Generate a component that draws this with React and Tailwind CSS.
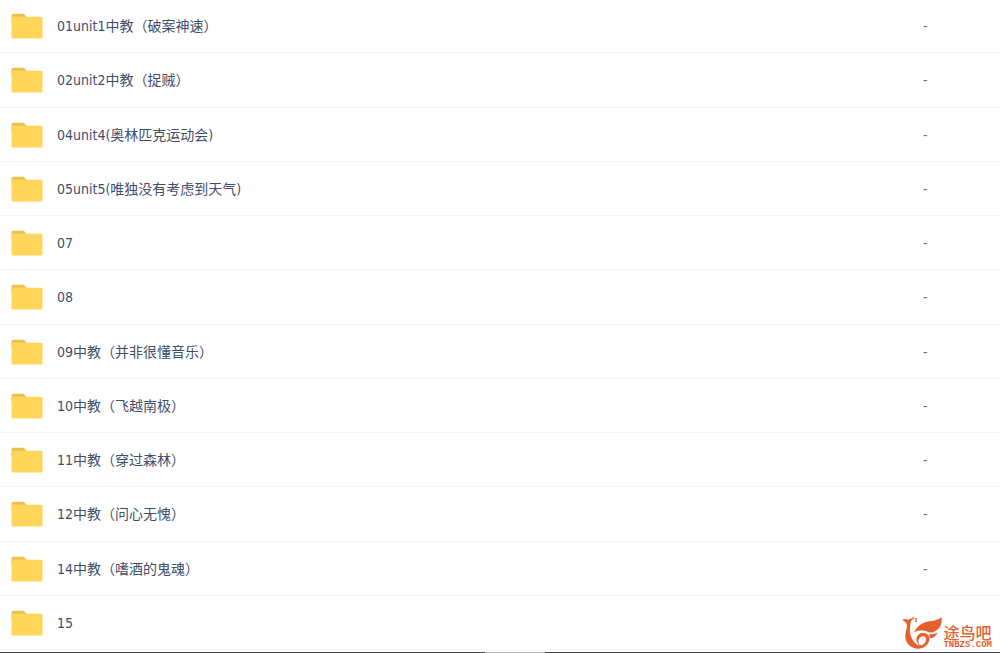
import React from "react";

const folders = [
  { id: 1, name: "01unit1中教（破案神速）", size: "-" },
  { id: 2, name: "02unit2中教（捉贼）", size: "-" },
  { id: 3, name: "04unit4(奥林匹克运动会)", size: "-" },
  { id: 4, name: "05unit5(唯独没有考虑到天气)", size: "-" },
  { id: 5, name: "07", size: "-" },
  { id: 6, name: "08", size: "-" },
  { id: 7, name: "09中教（并非很懂音乐）", size: "-" },
  { id: 8, name: "10中教（飞越南极）", size: "-" },
  { id: 9, name: "11中教（穿过森林）", size: "-" },
  { id: 10, name: "12中教（问心无愧）", size: "-" },
  { id: 11, name: "14中教（嗜酒的鬼魂）", size: "-" },
  { id: 12, name: "15", size: "" },
];

const FolderIcon = () => (
  <svg className="w-8 h-[26px] shrink-0" viewBox="0 0 32 26" aria-hidden="true">
    <path
      d="M0.5 2.5Q0.5 0.8 2.2 0.8H12Q13 0.8 13.6 1.6L15.5 4V9H0.5Z"
      fill="#ecc04f"
    />
    <path
      d="M0.5 5.2Q0.5 3.8 2 3.8H30Q31.5 3.8 31.5 5.3V24Q31.5 25.5 30 25.5H2Q0.5 25.5 0.5 24Z"
      fill="#ffd65a"
    />
  </svg>
);

const BirdLogo = () => (
  <svg className="w-10 h-8" viewBox="6 6 120 96" aria-hidden="true">
    <g fill="#e4602f">
      {/* head, neck and body */}
      <path d="M6 15C14 11 20 12 25 15C29 10 35 9 41 12C33 15 31 22 31 30C31 38 29 44 30 52C32 68 42 86 58 92C46 78 46 62 62 55C78 50 92 60 88 76C84 92 70 102 52 101C30 99 14 82 16 60C17 46 23 38 20 28C18 21 13 18 6 15Z" />
      {/* wing */}
      <path d="M42 52C52 32 66 23 90 19C106 17 116 14 125 7C127 26 119 44 102 50C96 53 90 53 86 52C76 45 56 44 42 52Z" />
      <path d="M87 57C97 59 107 57 113 52C108 65 98 71 90 69Z" />
      {/* crest */}
      <circle cx="40" cy="9" r="3" />
      <circle cx="48" cy="12" r="3" />
      <circle cx="48" cy="19" r="3" />
    </g>
    <path
      d="M63 65C72 60 80 66 78 76C76 86 68 92 60 90C53 83 54 71 63 65Z"
      fill="#fff"
    />
  </svg>
);

const FolderRow = ({ folder }) => (
  <tr className="h-[54px] first:h-[53px] nth-[4n+2]:h-[55px]">
    <td className="p-0 pl-[11px] border-b border-[#f2f4f8]">
      <div className="flex items-center gap-[14px]">
        <FolderIcon />
        <a href={`#folder-${folder.id}`} className="leading-5">
          {folder.name}
        </a>
      </div>
    </td>
    <td className="w-[77px] p-0 leading-5 text-[#6b7280] border-b border-[#f2f4f8]">
      {folder.size}
    </td>
  </tr>
);

export default function App() {
  return (
    <div className="relative min-h-screen flex flex-col justify-between bg-white font-['DejaVu_Sans_Condensed','Noto_Sans_CJK_SC',sans-serif] text-sm text-[#424e67]">
      <table className="w-full border-separate border-spacing-0">
        <tbody>
          {folders.map((folder) => (
            <FolderRow key={folder.id} folder={folder} />
          ))}
        </tbody>
      </table>

      {/* Bottom edge */}
      <div className="h-px bg-[#444247] flex justify-center">
        <div className="w-[6%] ml-[3%] bg-[#b5b3b5]" />
      </div>

      {/* Site logo */}
      <div className="absolute right-2 bottom-1 flex items-end gap-px text-[#e4602f]">
        <BirdLogo />
        <div className="flex flex-col gap-px">
          <span className="font-['Noto_Sans_CJK_SC',sans-serif] text-base leading-4 font-medium">
            途鸟吧
          </span>
          <span className="font-['Liberation_Mono',monospace] text-[9px] leading-2 font-bold">
            TNBZS.COM
          </span>
        </div>
      </div>
    </div>
  );
}
